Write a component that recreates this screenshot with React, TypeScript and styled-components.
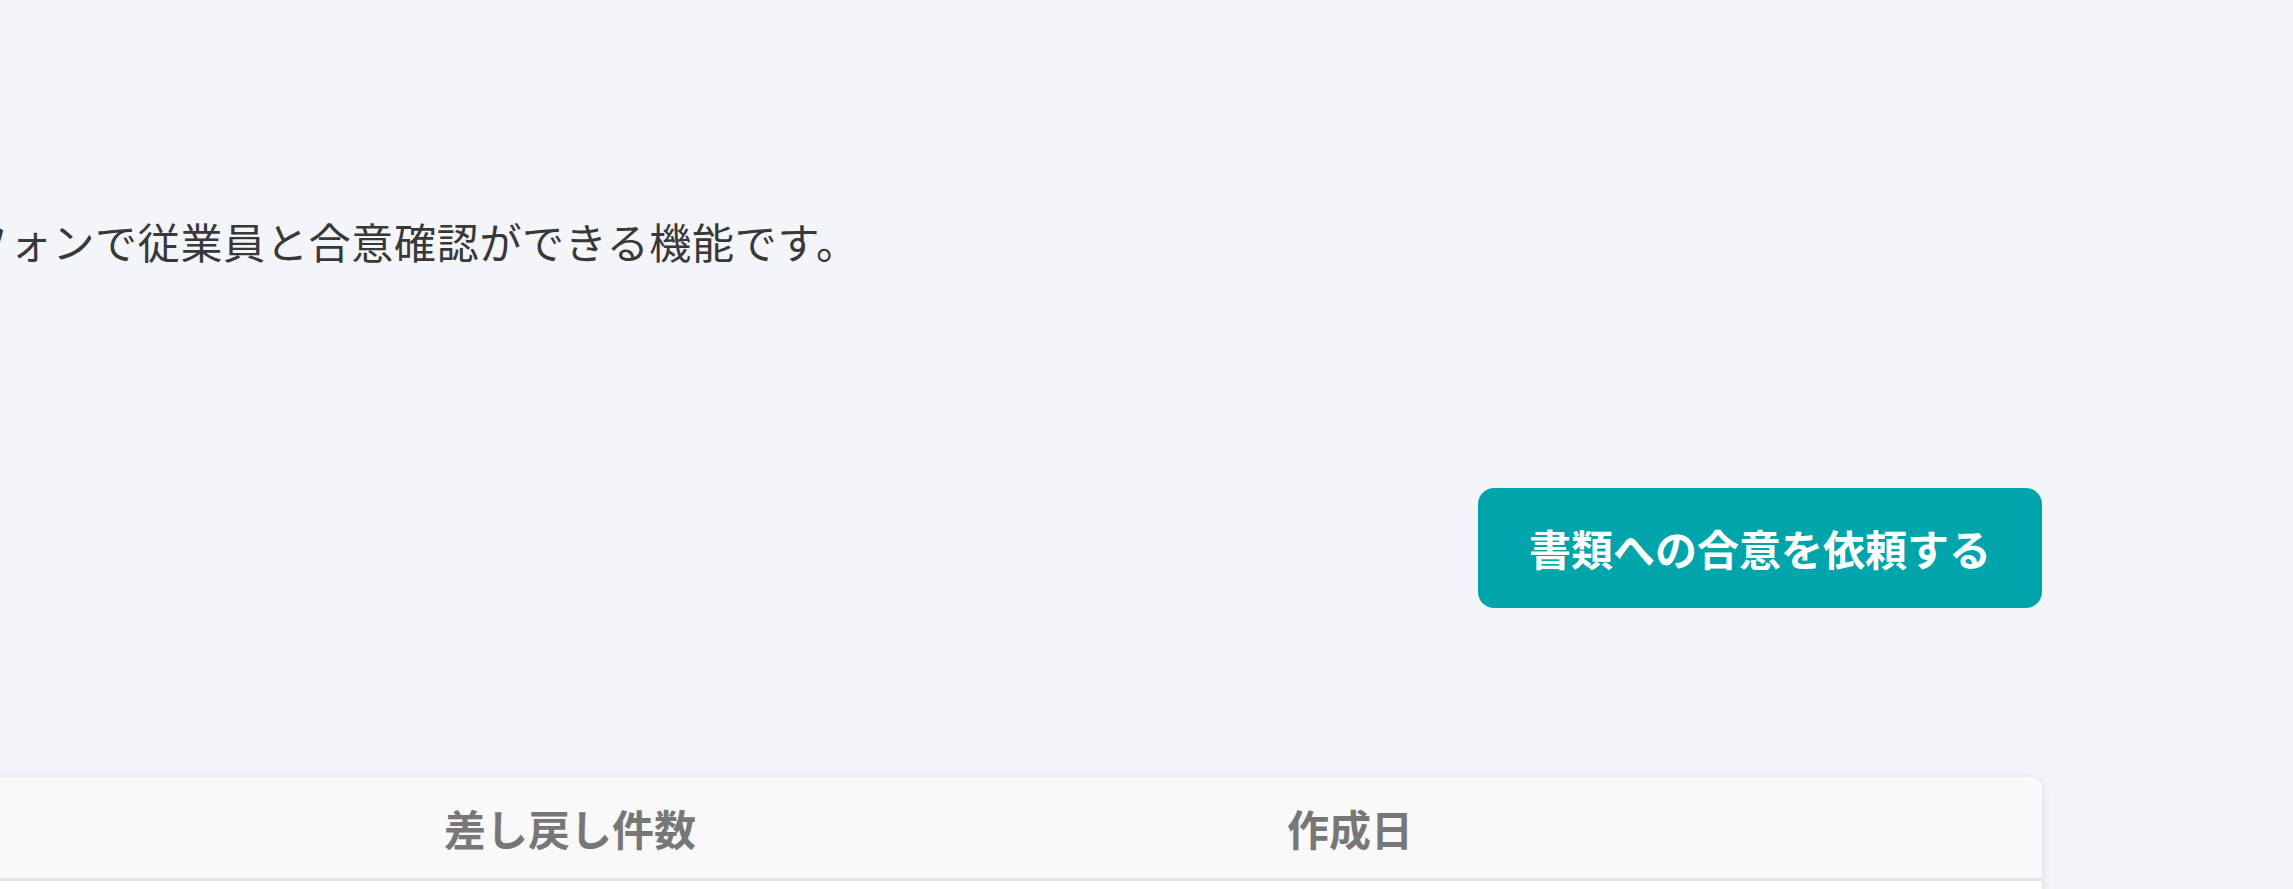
import React from "react";
import styled, { createGlobalStyle } from "styled-components";

const GlobalStyle = createGlobalStyle`
  html, body {
    margin: 0;
    padding: 0;
    background: #f4f5f9;
    overflow: hidden;
  }
  body {
    font-family: "Noto Sans CJK JP", "Noto Sans", sans-serif;
    color: #333333;
  }
  * { box-sizing: border-box; }
`;

const Page = styled.div`
  width: 2102px;
  margin-left: -60px;
  display: flex;
  flex-direction: column;
  padding-top: 209px;
`;

const Description = styled.p`
  margin: 0;
  padding-left: 27px;
  font-size: 42px;
  line-height: 63px;
  letter-spacing: 0.7px;
  color: #383838;
  white-space: nowrap;
`;

const ActionRow = styled.div`
  display: flex;
  justify-content: flex-end;
  margin-top: 216px;
`;

const PrimaryButton = styled.button`
  width: 564px;
  height: 120px;
  border: none;
  border-radius: 16px;
  background: #00a5ab;
  color: #ffffff;
  font-family: "Noto Sans CJK JP", "Noto Sans", sans-serif;
  font-size: 42px;
  font-weight: 700;
  line-height: 1;
  display: flex;
  align-items: center;
  justify-content: center;
  cursor: pointer;
`;

const TableCard = styled.div`
  margin-top: 169px;
  background: #ffffff;
  border-radius: 12px;
  box-shadow: 0 2px 10px rgba(0, 0, 0, 0.12);
  overflow: hidden;
`;

const Row = styled.div<{ $header?: boolean }>`
  display: grid;
  grid-template-columns: 240px 780px 780px 302px;
  height: ${(p) => (p.$header ? "104px" : "100px")};
  background: ${(p) => (p.$header ? "#f9f9f9" : "#ffffff")};
  border-bottom: ${(p) => (p.$header ? "3px solid #e3e3e3" : "1px solid #eeeeee")};
`;

const HeaderCell = styled.div`
  display: flex;
  align-items: center;
  justify-content: center;
  font-size: 42px;
  font-weight: 700;
  color: #777777;
`;

const Cell = styled.div`
  display: flex;
  align-items: center;
  justify-content: center;
  font-size: 42px;
  color: #333333;
`;

export default function App() {
  return (
    <>
      <GlobalStyle />
      <Page>
        <Description>フォンで従業員と合意確認ができる機能です。</Description>
        <ActionRow>
          <PrimaryButton>書類への合意を依頼する</PrimaryButton>
        </ActionRow>
        <TableCard>
          <Row $header>
            <HeaderCell />
            <HeaderCell>差し戻し件数</HeaderCell>
            <HeaderCell>作成日</HeaderCell>
            <HeaderCell />
          </Row>
          <Row>
            <Cell />
            <Cell />
            <Cell />
            <Cell />
          </Row>
        </TableCard>
      </Page>
    </>
  );
}
